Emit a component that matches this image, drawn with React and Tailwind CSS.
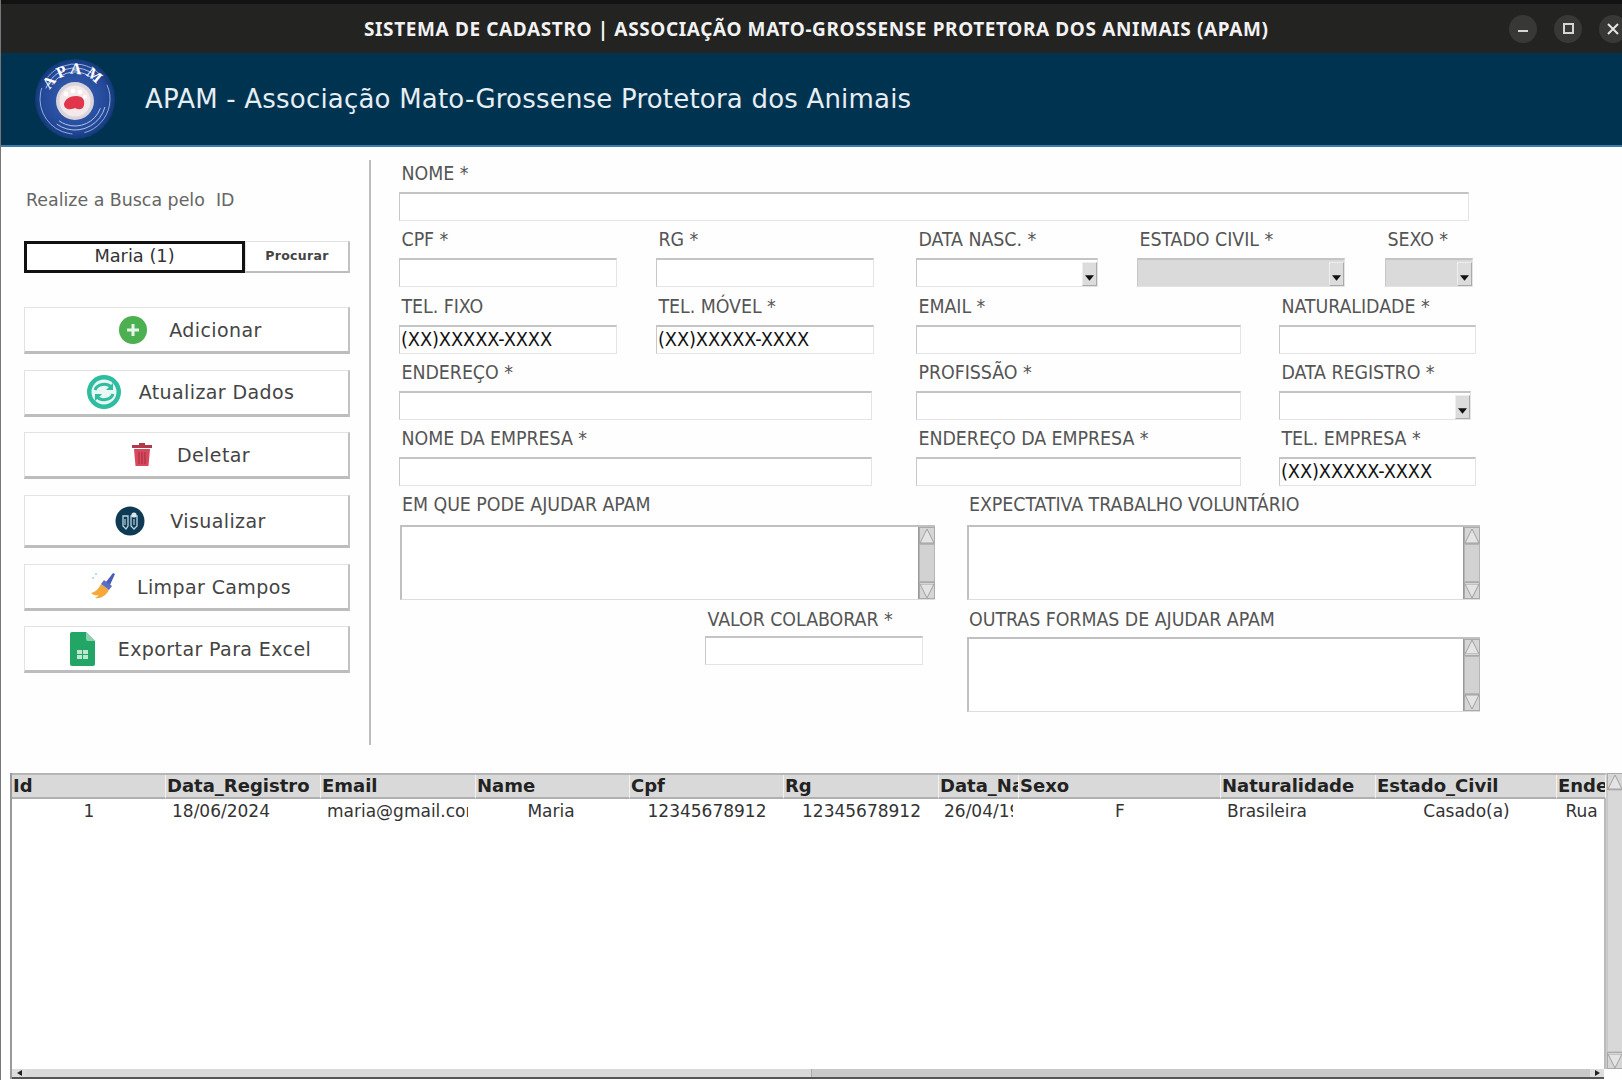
import React from "react";

const Logo = () => (
  <svg viewBox="0 0 84 84" className="w-[84px] h-[84px]">
    <defs>
      <radialGradient id="lg" cx="50%" cy="50%" r="50%">
        <stop offset="0%" stopColor="#3a62b4" />
        <stop offset="80%" stopColor="#24499a" />
        <stop offset="100%" stopColor="#123a78" />
      </radialGradient>
      <path id="arc" d="M15 44 A27 27 0 0 1 69 44" fill="none" />
    </defs>
    <circle cx="42" cy="42" r="40" fill="url(#lg)" />
    <circle cx="42" cy="42" r="35" fill="none" stroke="#a9bde6" strokeWidth="0.8" strokeDasharray="60 12" transform="rotate(100 42 42)" />
    <circle cx="42" cy="42" r="31" fill="none" stroke="#c3d1ee" strokeWidth="0.8" strokeDasharray="60 40" transform="rotate(15 42 42)" />
    <circle cx="42" cy="42" r="27" fill="none" stroke="#c3d1ee" strokeWidth="0.8" strokeDasharray="50 40" transform="rotate(20 42 42)" />
    <text fontFamily="'Liberation Serif', serif" fontWeight="700" fontSize="16" fill="#ffffff" letterSpacing="3">
      <textPath href="#arc" startOffset="13%">APAM</textPath>
    </text>
    <circle cx="42" cy="44" r="19" fill="#d9d3dc" />
    <circle cx="42" cy="44" r="15.500" fill="#f3e8ea" />
    <circle cx="33" cy="37" r="2.4" fill="#fff" />
    <circle cx="40" cy="34" r="2.4" fill="#fff" />
    <circle cx="47" cy="35" r="2.4" fill="#fff" />
    <circle cx="52" cy="40" r="2.200" fill="#fff" />
    <path d="M31 47 C32 42 37 39 43 39 C50 39 52 43 51 48 C50 53 46 53 42 51 C38 53 31 53 31 47 Z" fill="#e0354a" />
  </svg>
);

const Plus = () => (
  <svg viewBox="0 0 28 28" className="w-[28px] h-[28px]">
    <circle cx="14" cy="14" r="14" fill="#4caf50" />
    <path d="M14 8v12M8 14h12" stroke="#e8f5e9" strokeWidth="3" />
  </svg>
);
const Refresh = () => (
  <svg viewBox="0 0 34 34" className="w-[34px] h-[34px]">
    <circle cx="17" cy="17" r="17" fill="#2ebd9f" />
    <circle cx="17" cy="17" r="12.5" fill="#e9f8f5" />
    <path d="M8 15 C10 9 20 7 25 13 M26 19 C24 25 14 27 9 21" fill="none" stroke="#2ebd9f" strokeWidth="3" />
    <path d="M26 8v7h-7zM8 26v-7h7z" fill="#2ebd9f" />
  </svg>
);
const Trash = () => (
  <svg viewBox="0 0 22 25" className="w-[22px] h-[25px]">
    <path d="M8 1h6v2h7v3H1V3h7z" fill="#b03a4a" />
    <path d="M3 7h16l-1.500 17h-13z" fill="#d9485c" />
    <path d="M8 10v12M11 10v12M14 10v12" stroke="#a83244" strokeWidth="1.2" />
  </svg>
);
const View = () => (
  <svg viewBox="0 0 30 30" className="w-[30px] h-[30px]">
    <circle cx="15" cy="15" r="14.5" fill="#0f3a54" />
    <path d="M8 10h5v10l-2 3-3-3zM16 10h6v10l-3 3-3-3z" fill="none" stroke="#b9d3e2" strokeWidth="1.3" />
    <circle cx="19" cy="9" r="2.6" fill="#d7e6ee" />
    <path d="M10 13v6M19 13v6" stroke="#d7e6ee" strokeWidth="1" />
  </svg>
);
const Broom = () => (
  <svg viewBox="0 0 26 28" className="w-[26px] h-[28px]">
    <path d="M1 21 C6 20 9 16 11 12 L19 18 C16 24 10 27 5 26 C7 25 8 24 8.5 23 C6 24 3 23 1 21 Z" fill="#f4a93a" />
    <path d="M11 12 L14 8 L22 14 L19 18 Z" fill="#5a6dc8" />
    <path d="M16 10 L23 1 L25 2 L20 13 Z" fill="#4a5cb8" />
    <circle cx="3" cy="6" r="1" fill="#9fd4ee" /><circle cx="6" cy="2" r="1" fill="#9fd4ee" />
  </svg>
);
const Sheet = () => (
  <svg viewBox="0 0 25 34" className="w-[25px] h-[34px]">
    <path d="M2 0h14l9 9v23a2 2 0 0 1-2 2H2a2 2 0 0 1-2-2V2a2 2 0 0 1 2-2z" fill="#23a566" />
    <path d="M16 0l9 9h-7a2 2 0 0 1-2-2z" fill="#8ed1ae" />
    <path d="M7 18h11v9H7z" fill="#bfe6d1" />
    <path d="M12.5 18v9M7 22.500h11" stroke="#23a566" strokeWidth="1" />
  </svg>
);

const Btn = ({ icon, label, h = "h-[47px]", gap = "gap-[22px]" }) => (
  <button className={`${h} ${gap} w-[326px] pl-[8px] flex items-center justify-center bg-white border border-[#e2e2e2] border-r-2 border-b-[3px] border-r-[#c2c2c2] border-b-[#bdbdbd] text-[19px] tracking-[0.4px] text-[#444]`}>
    {icon}
    <span className="pt-[1px]">{label}</span>
  </button>
);

const Arrow = () => (
  <div className="w-[15px] h-[24px] bg-[#dcdcdc] border border-[#eee] border-r-[#aaa] border-b-[#aaa] flex items-end justify-center pb-[4px]">
    <svg viewBox="0 0 10 6" className="w-[9px] h-[6px]"><path d="M0 0h10L5 6z" fill="#111" /></svg>
  </div>
);

const Box = ({ w, text, select, gray }) => (
  <div className={`${w} h-[29px] flex items-center border-t-2 border-l border-r border-b border-t-[#c4c4c4] border-l-[#c8c8c8] border-r-[#e4e4e4] border-b-[#e4e4e4] ${gray ? "bg-[#dadada]" : "bg-white"} text-[19.800px] tracking-[-0.1px] text-[#111] pl-[1px] ${select ? "justify-end items-end pr-0" : ""}`}>
    {text}
    {select && <Arrow />}
  </div>
);

const Field = ({ label, w, ml = "", mb = "mb-[8px]", ...p }) => (
  <div className={`${ml} ${w} flex flex-col shrink-0`}>
    <div className={`h-[22px] leading-[23px] ${mb} pl-[2.500px] text-[19.400px] tracking-[-0.05px] text-[#555] whitespace-nowrap`}>{label}</div>
    <Box w="w-full" {...p} />
  </div>
);

const Tri = ({ down }) => (
  <div className="w-full h-[17px] bg-[#d6d6d6] border border-[#aaa] flex items-center justify-center">
    <svg viewBox="0 0 14 14" className="w-[14px] h-[14px]">
      <path d={down ? "M0 0h14L7 14z" : "M0 14h14L7 0z"} fill="#e4e4e4" stroke="#a0a0a0" />
    </svg>
  </div>
);

const Area = ({ label, w, ml = "", mb = "mb-[7px]" }) => (
  <div className={`${w} ${ml} flex flex-col shrink-0`}>
    <div className={`h-[22px] leading-[24px] ${mb} pl-[2px] text-[19.400px] tracking-[-0.05px] text-[#555] whitespace-nowrap`}>{label}</div>
    <div className="h-[75px] flex border-t-2 border-l-2 border-[#c0c0c0] border-b border-b-[#ddd]">
      <div className="flex-1 bg-white" />
      <div className="w-[17px] flex flex-col bg-[#d2d2d2] border-l border-[#999]">
        <Tri />
        <div className="flex-1 border border-[#b5b5b5]" />
        <Tri down />
      </div>
    </div>
  </div>
);

const cols = "grid grid-cols-[154px_155px_155px_154px_154px_155px_80px_202px_155px_181px_49px]";
const heads = ["Id", "Data_Registro", "Email", "Name", "Cpf", "Rg", "Data_Nasc", "Sexo", "Naturalidade", "Estado_Civil", "Endereco"];
const cells = [
  ["1", "text-center px-[6px]"],
  ["18/06/2024", "text-left pl-[6px] leading-[24px]"],
  ["maria@gmail.com", "text-left pl-[6px] pr-[8px]"],
  ["Maria", "text-center pl-[4px] pr-[8px]"],
  ["12345678912", "text-center px-[6px]"],
  ["12345678912", "text-center px-[6px]"],
  ["26/04/1990", "text-left pl-[5px] pr-[6px]"],
  ["F", "text-center px-[6px]"],
  ["Brasileira", "text-left pl-[6px] leading-[24px]"],
  ["Casado(a)", "text-center px-[6px]"],
  ["Rua", "text-center px-[6px]"],
];

export default function App() {
  return (
    <div className="w-[1622px] h-[1080px] overflow-hidden flex flex-col bg-[#fefefe] border-l border-[#777] font-['DejaVu_Sans',sans-serif]">
      <div className="h-[53px] shrink-0 bg-[#232322] border-t-4 border-[#121212] flex items-center pl-[363px] text-[#f2f2f2]">
        <span className="pt-[1px] font-['Noto_Sans',sans-serif] font-bold text-[19px] tracking-[0.62px] whitespace-nowrap">
          SISTEMA DE CADASTRO | ASSOCIAÇÃO MATO-GROSSENSE PROTETORA DOS ANIMAIS (APAM)
        </span>
        <div className="ml-auto flex gap-[17px] mr-[-5px] shrink-0">
          <div className="w-[28px] h-[28px] rounded-full bg-[#383837] flex items-center justify-center">
            <div className="w-[10px] h-[2px] bg-[#d5d5d5] mt-[4px]" />
          </div>
          <div className="w-[28px] h-[28px] rounded-full bg-[#383837] flex items-center justify-center">
            <div className="w-[11px] h-[11px] border-2 border-[#d5d5d5]" />
          </div>
          <div className="w-[28px] h-[28px] rounded-full bg-[#383837] flex items-center justify-center">
            <svg viewBox="0 0 12 12" className="w-[12px] h-[12px]"><path d="M1 1l10 10M11 1L1 11" stroke="#e5e5e5" strokeWidth="2" /></svg>
          </div>
        </div>
      </div>

      <div className="h-[94px] shrink-0 bg-[#003350] border-b-2 border-[#3f7ba8] flex items-center pl-[32px]">
        <Logo />
        <span className="ml-[28px] text-[26px] tracking-[0.2px] text-[#e6eef3] whitespace-nowrap">
          APAM - Associação Mato-Grossense Protetora dos Animais
        </span>
      </div>

      <div className="h-[626px] shrink-0 flex">
        <div className="w-[370px] h-[585px] mt-[13px] shrink-0 border-r-2 border-[#bdbdbd] pl-[23px] flex flex-col">
          <div className="mt-[28px] h-[24px] leading-[24px] pl-[2px] text-[17.400px] text-[#666] whitespace-pre">Realize a Busca pelo  ID</div>
          <div className="mt-[29px] flex h-[32px]">
            <div className="w-[221px] pb-[1px] border-[3px] border-[#111] bg-white flex items-center justify-center text-[17.800px] text-[#333]">Maria (1)</div>
            <button className="w-[105px] border border-[#e2e2e2] border-r-2 border-b-2 border-r-[#c2c2c2] border-b-[#bdbdbd] bg-white text-[12.500px] font-bold tracking-[0.3px] text-[#444]">Procurar</button>
          </div>
          <div className="mt-[34px] flex flex-col gap-[15.700px]">
            <Btn icon={<Plus />} label="Adicionar" gap="gap-[22px]" />
            <Btn icon={<Refresh />} label="Atualizar Dados" gap="gap-[18px]" />
            <Btn icon={<Trash />} label="Deletar" gap="gap-[24px]" />
            <Btn icon={<View />} label="Visualizar" h="h-[53px]" gap="gap-[25px]" />
            <Btn icon={<Broom />} label="Limpar Campos" gap="gap-[21px]" />
            <Btn icon={<Sheet />} label="Exportar Para Excel" gap="gap-[23px]" />
          </div>
        </div>

        <div className="flex-1 pl-[28px] pt-[15px] flex flex-col gap-[7.250px] font-['DejaVu_Sans_Condensed','DejaVu_Sans',sans-serif]">
          <div className="flex">
            <Field label="NOME *" w="w-[1070px]" />
          </div>
          <div className="flex">
            <Field label="CPF *" w="w-[218px]" />
            <Field label="RG *" w="w-[218px]" ml="ml-[39px]" />
            <Field label="DATA NASC. *" w="w-[182px]" ml="ml-[42px]" select />
            <Field label="ESTADO CIVIL *" w="w-[208px]" ml="ml-[39px]" select gray />
            <Field label="SEXO *" w="w-[88px]" ml="ml-[40px]" select gray />
          </div>
          <div className="flex">
            <Field label="TEL. FIXO" w="w-[218px]" text="(XX)XXXXX-XXXX" />
            <Field label="TEL. MÓVEL *" w="w-[218px]" ml="ml-[39px]" text="(XX)XXXXX-XXXX" />
            <Field label="EMAIL *" w="w-[325px]" ml="ml-[42px]" />
            <Field label="NATURALIDADE *" w="w-[197px]" ml="ml-[38px]" />
          </div>
          <div className="flex">
            <Field label="ENDEREÇO *" w="w-[473px]" />
            <Field label="PROFISSÃO *" w="w-[325px]" ml="ml-[44px]" />
            <Field label="DATA REGISTRO *" w="w-[192px]" ml="ml-[38px]" select />
          </div>
          <div className="flex">
            <Field label="NOME DA EMPRESA *" w="w-[473px]" />
            <Field label="ENDEREÇO DA EMPRESA *" w="w-[325px]" ml="ml-[44px]" />
            <Field label="TEL. EMPRESA *" w="w-[197px]" ml="ml-[38px]" text="(XX)XXXXX-XXXX" />
          </div>
          <div className="flex">
            <Area label="EM QUE PODE AJUDAR APAM" w="w-[535px]" ml="ml-[1px]" mb="mb-[10px]" />
            <Area label="EXPECTATIVA TRABALHO VOLUNTÁRIO" w="w-[513px]" ml="ml-[32px]" mb="mb-[10px]" />
          </div>
          <div className="flex">
            <Field label="VALOR COLABORAR *" w="w-[218px]" ml="ml-[306px]" mb="mb-[6px]" />
            <Area label="OUTRAS FORMAS DE AJUDAR APAM" w="w-[513px]" ml="ml-[44px]" />
          </div>
        </div>
      </div>

      <div className="h-[306px] shrink-0 ml-[9px] flex flex-col border-l-2 border-[#9a9a9a]">
        <div className="flex-1 flex min-h-0">
          <div className="w-[1594px] shrink-0 flex flex-col border-r-2 border-[#bbb]">
            <div className={`${cols} h-[26px] shrink-0 border-t-2 border-[#b5b5b5]`}>
              {heads.map((h) => (
                <div key={h} className="bg-[#d9d9d9] border-r border-b-2 border-[#b0b0b0] border-r-[#f2f2f2] pl-[1px] overflow-hidden whitespace-nowrap text-[18px] leading-[22px] font-bold text-[#222]">{h}</div>
              ))}
            </div>
            <div className={`${cols} h-[26px] shrink-0 bg-white`}>
              {cells.map(([t, c], i) => (
                <div key={i} className={`whitespace-nowrap text-[17px] leading-[25px] text-[#333] ${c}`}>
                  <div className="overflow-hidden">{t}</div>
                </div>
              ))}
            </div>
            <div className="flex-1 bg-white" />
          </div>
          <div className="flex-1 flex flex-col bg-[#d8d8d8] border-l border-[#ccc]">
            <Tri />
            <div className="flex-1 border border-[#c8c8c8]" />
            <Tri down />
          </div>
        </div>
        <div className="h-[10px] shrink-0 flex items-center bg-[#c9c9c9] border-b-2 border-[#555] mr-[18px]">
          <div className="w-[14px] h-full bg-[#ddd] flex items-center justify-center">
            <div className="w-0 h-0 border-y-[3px] border-y-transparent border-r-[5px] border-r-[#222]" />
          </div>
          <div className="w-[786px] h-full bg-[#d9d9d9] border-r border-[#aaa]" />
          <div className="flex-1" />
          <div className="w-[14px] h-full bg-[#ddd] flex items-center justify-center">
            <div className="w-0 h-0 border-y-[3px] border-y-transparent border-l-[5px] border-l-[#222]" />
          </div>
        </div>
      </div>
    </div>
  );
}
